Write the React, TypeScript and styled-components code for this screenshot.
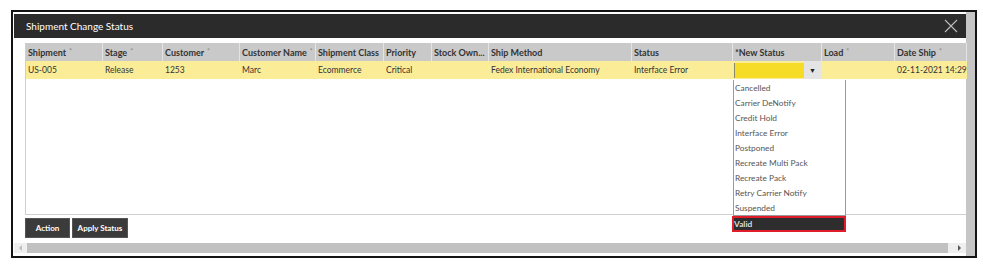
import React from "react";
import styled, { createGlobalStyle } from "styled-components";

const Global = createGlobalStyle`
  html, body { margin: 0; padding: 0; background: #fff; }
  body { font-family: Lato, "Open Sans", Arial, sans-serif; }
  * { box-sizing: border-box; }
`;

const Frame = styled.div`
  margin: 10px 0 0 11px;
  width: 966px;
  height: 248px;
  border: 2px solid #141414;
  display: flex;
  background: #fff;
`;

const Main = styled.div`
  flex: 1;
  min-width: 0;
  padding: 2px 0 3px 1px;
  display: flex;
  flex-direction: column;
`;

const VScroll = styled.div`
  width: 9px;
  background: #c6c6c6;
  flex-shrink: 0;
`;

const TitleBar = styled.div`
  height: 24px;
  background: #2b2b2b;
  display: flex;
  align-items: center;
  justify-content: space-between;
  padding: 0 8px 0 12px;
  color: #fff;
  font-size: 10px;
`;

const Content = styled.div`
  padding-left: 11px;
  margin-top: 5px;
  display: flex;
  flex-direction: column;
`;

const Grid = styled.div`
  height: 172px;
  border-left: 1px solid #cfcfcf;
  border-bottom: 1px solid #cfcfcf;
  position: relative;
`;

const HeaderRow = styled.div`
  display: flex;
  height: 18px;
  background: #c9c9c9;
  width: 941px;
  overflow: hidden;
`;

const HeadCell = styled.div<{ $w: number }>`
  width: ${(p) => p.$w}px;
  flex-shrink: 0;
  border-right: 1px solid #e4e4e4;
  padding-left: 2px;
  font-size: 9px;
  font-weight: 700;
  color: #333;
  display: flex;
  align-items: center;
  white-space: nowrap;
  overflow: hidden;
`;

const Sort = styled.span`
  font-size: 7px;
  font-weight: 400;
  color: #8a8a8a;
  margin-left: 3px;
  position: relative;
  top: -1px;
`;

const DataRow = styled.div`
  display: flex;
  height: 18px;
  background: #fbec98;
  width: 941px;
`;

const Cell = styled.div<{ $w: number }>`
  width: ${(p) => p.$w}px;
  flex-shrink: 0;
  padding-left: 2px;
  font-size: 8.5px;
  color: #333;
  display: flex;
  align-items: center;
  white-space: nowrap;
  overflow: hidden;
`;

const EditCell = styled.div<{ $w: number }>`
  width: ${(p) => p.$w}px;
  flex-shrink: 0;
  display: flex;
  position: relative;
  padding-left: 1px;
`;

const Input = styled.div`
  width: 70px;
  background: #f6dc26;
  border-left: 1px solid #8a8a6a;
  margin: 2px 0 1px 0;
`;

const DropBtn = styled.div`
  width: 17px;
  background: #e4e4e4;
  display: flex;
  align-items: center;
  justify-content: center;
  font-size: 7px;
  color: #222;
`;

const List = styled.div`
  position: absolute;
  left: 0;
  top: 19px;
  width: 113px;
  border: 1px solid #9a9a9a;
  border-top: none;
  background: #fff;
  z-index: 5;
`;

const Item = styled.div`
  height: 15px;
  font-size: 8.3px;
  color: #555;
  display: flex;
  align-items: center;
  padding-left: 1px;
  white-space: nowrap;
`;

const Selected = styled.div`
  position: absolute;
  left: -1px;
  top: 155px;
  width: 114px;
  height: 16px;
  background: #2d2d2d;
  border: 2px solid #e21d2b;
  color: #ddd;
  font-size: 8.3px;
  font-weight: 700;
  display: flex;
  align-items: center;
  padding-left: 0;
  z-index: 6;
`;

const Buttons = styled.div`
  display: flex;
  gap: 2px;
  margin-top: 3px;
`;

const Button = styled.button<{ $w: number }>`
  width: ${(p) => p.$w}px;
  height: 20px;
  background: #3b3b3b;
  border: 1px solid #555;
  color: #fff;
  font-family: Lato, Arial, sans-serif;
  font-size: 8px;
  font-weight: 700;
  padding: 0;
`;

const HScroll = styled.div`
  margin-top: 5px;
  height: 10px;
  background: #efefef;
  display: flex;
  align-items: center;
`;

const Arrow = styled.div<{ $dir: "l" | "r" }>`
  width: 13px;
  height: 10px;
  display: flex;
  align-items: center;
  justify-content: center;
  &::before {
    content: "";
    border-top: 3px solid transparent;
    border-bottom: 3px solid transparent;
    ${(p) =>
      p.$dir === "l"
        ? "border-right: 3px solid #bdbdbd;"
        : "border-left: 3px solid #555;"}
  }
`;

const Thumb = styled.div`
  height: 10px;
  width: 921px;
  background: #c1c1c1;
`;

const Spacer = styled.div`
  flex: 1;
`;

const cols: { label: string; w: number; sort?: boolean }[] = [
  { label: "Shipment", w: 77, sort: true },
  { label: "Stage", w: 60, sort: true },
  { label: "Customer", w: 77, sort: true },
  { label: "Customer Name", w: 76, sort: true },
  { label: "Shipment Class", w: 68 },
  { label: "Priority", w: 48 },
  { label: "Stock Own...", w: 57 },
  { label: "Ship Method", w: 143 },
  { label: "Status", w: 101 },
  { label: "*New Status", w: 89 },
  { label: "Load", w: 73, sort: true },
  { label: "Date Ship", w: 72, sort: true },
];

const row = [
  "US-005",
  "Release",
  "1253",
  "Marc",
  "Ecommerce",
  "Critical",
  "",
  "Fedex International Economy",
  "Interface Error",
  null,
  "",
  "02-11-2021 14:29",
];

const options = [
  "Cancelled",
  "Carrier DeNotify",
  "Credit Hold",
  "Interface Error",
  "Postponed",
  "Recreate Multi Pack",
  "Recreate Pack",
  "Retry Carrier Notify",
  "Suspended",
];

const CloseIcon = () => (
  <svg width="14" height="14" viewBox="0 0 14 14">
    <path d="M1 1 L13 13 M13 1 L1 13" stroke="#bdbdbd" strokeWidth="1.1" fill="none" />
  </svg>
);

export default function App() {
  return (
    <>
      <Global />
      <Frame>
        <Main>
          <TitleBar>
            <span>Shipment Change Status</span>
            <CloseIcon />
          </TitleBar>
          <Content>
            <Grid>
              <HeaderRow>
                {cols.map((c) => (
                  <HeadCell key={c.label} $w={c.w}>
                    {c.label}
                    {c.sort && <Sort>*</Sort>}
                  </HeadCell>
                ))}
              </HeaderRow>
              <DataRow>
                {cols.map((c, i) =>
                  row[i] === null ? (
                    <EditCell key={c.label} $w={c.w}>
                      <Input />
                      <DropBtn>▼</DropBtn>
                      <List>
                        {options.map((o) => (
                          <Item key={o}>{o}</Item>
                        ))}
                      </List>
                      <Selected>Valid</Selected>
                    </EditCell>
                  ) : (
                    <Cell key={c.label} $w={c.w}>
                      {row[i]}
                    </Cell>
                  )
                )}
              </DataRow>
            </Grid>
            <Buttons>
              <Button $w={45}>Action</Button>
              <Button $w={56}>Apply Status</Button>
            </Buttons>
          </Content>
          <HScroll>
            <Arrow $dir="l" />
            <Thumb />
            <Spacer />
            <Arrow $dir="r" />
          </HScroll>
        </Main>
        <VScroll />
      </Frame>
    </>
  );
}
